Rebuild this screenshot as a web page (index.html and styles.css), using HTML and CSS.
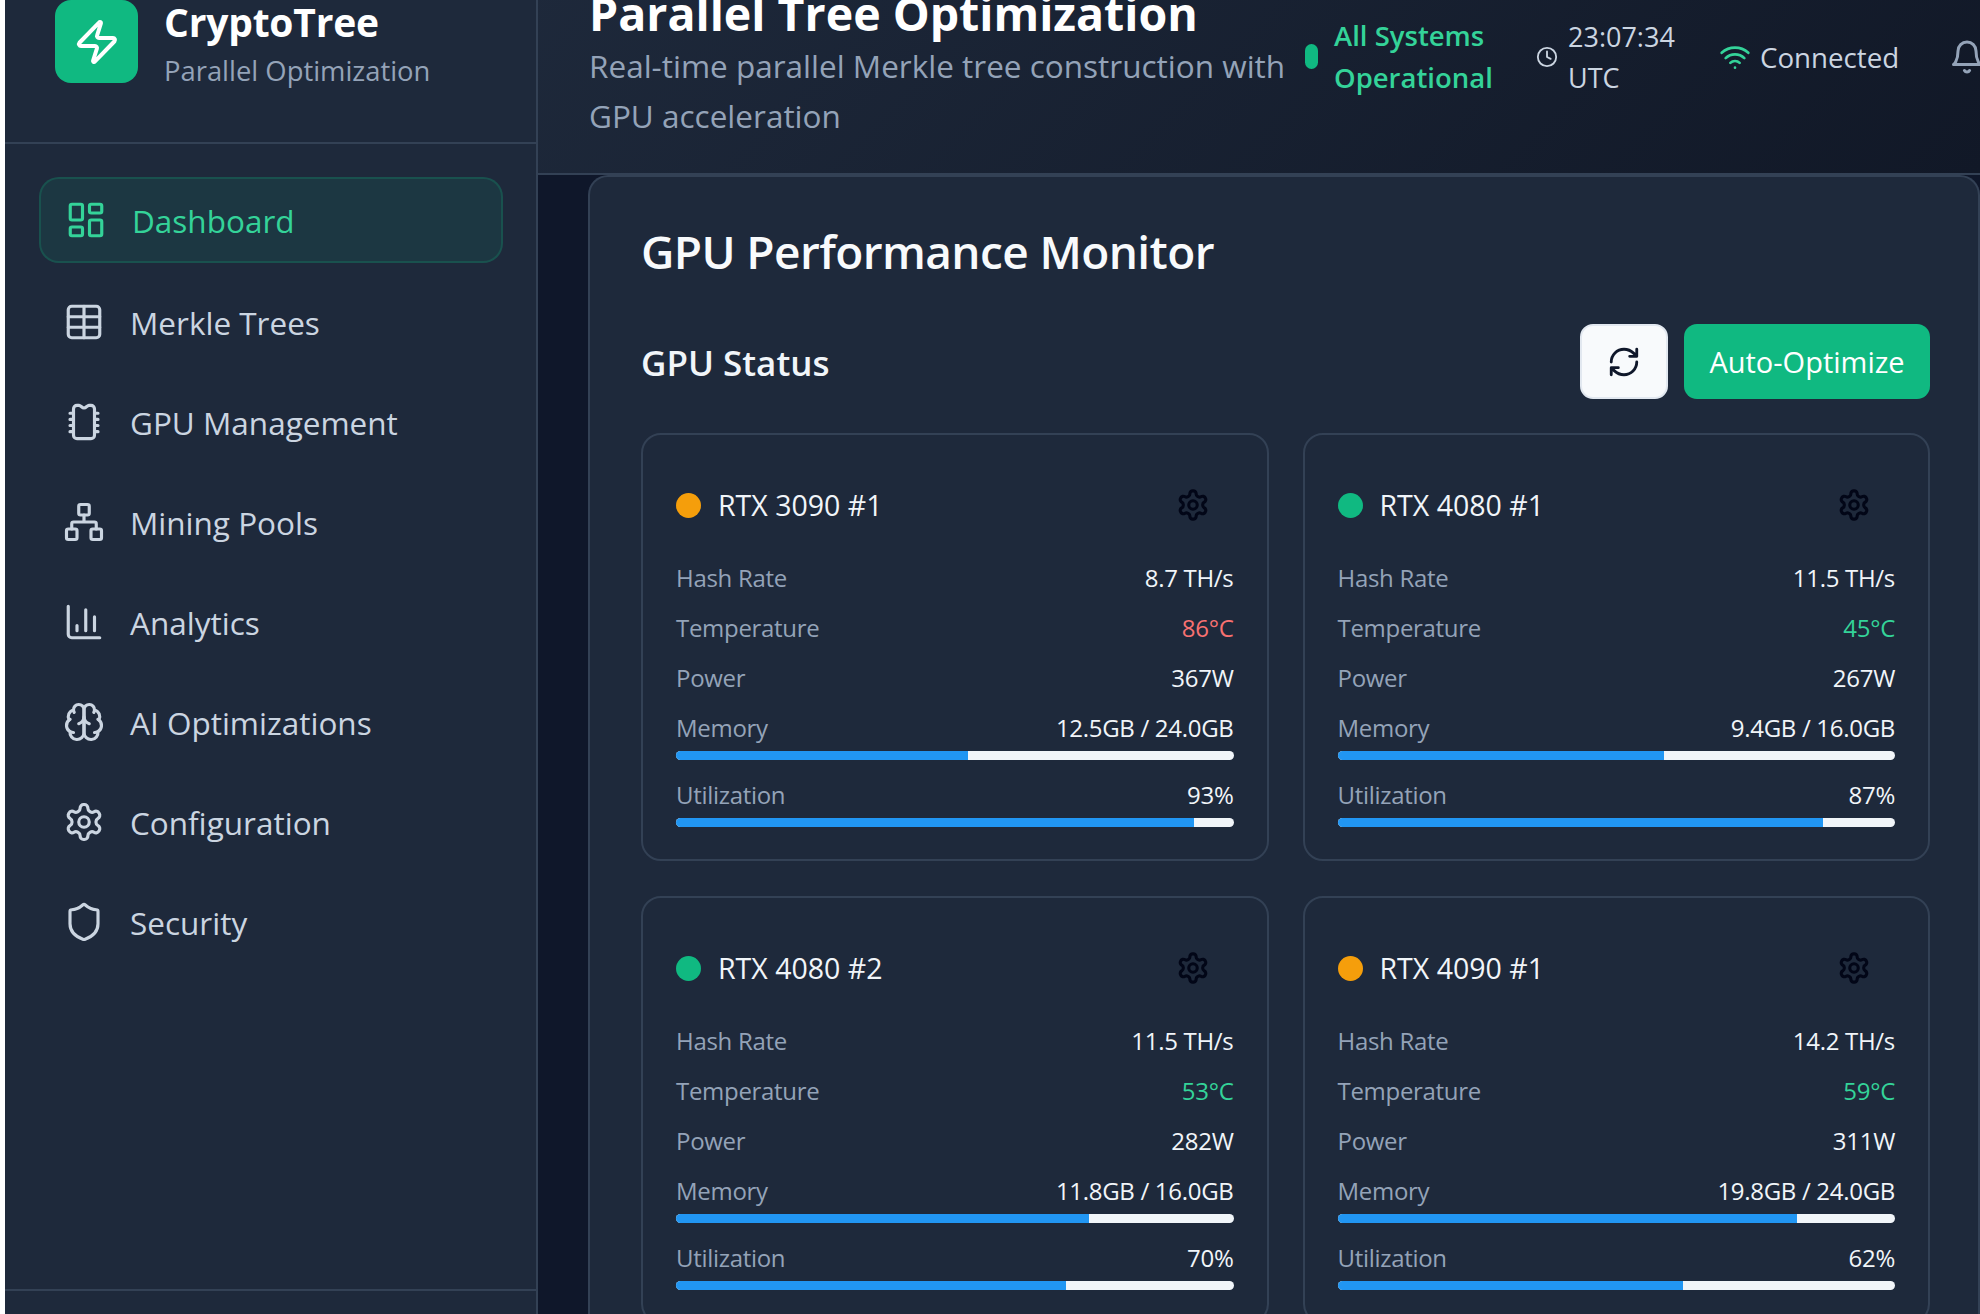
FILE: index.html
```html
<!DOCTYPE html>
<html lang="en">
<head>
    <meta charset="UTF-8">
    <meta name="viewport" content="width=device-width, initial-scale=1.0">
    <title>CryptoTree - GPU Performance Monitor</title>
    <link rel="stylesheet" href="styles.css">
</head>
<body>
    <svg class="icon-defs" aria-hidden="true">
        <symbol id="i-gear" viewBox="0 0 24 24">
            <path d="M12.22 2h-.44a2 2 0 0 0-2 2v.18a2 2 0 0 1-1 1.73l-.43.25a2 2 0 0 1-2 0l-.15-.08a2 2 0 0 0-2.73.73l-.22.38a2 2 0 0 0 .73 2.73l.15.1a2 2 0 0 1 1 1.72v.51a2 2 0 0 1-1 1.74l-.15.09a2 2 0 0 0-.73 2.73l.22.38a2 2 0 0 0 2.73.73l.15-.08a2 2 0 0 1 2 0l.43.25a2 2 0 0 1 1 1.73V20a2 2 0 0 0 2 2h.44a2 2 0 0 0 2-2v-.18a2 2 0 0 1 1-1.73l.43-.25a2 2 0 0 1 2 0l.15.08a2 2 0 0 0 2.73-.73l.22-.39a2 2 0 0 0-.73-2.73l-.15-.08a2 2 0 0 1-1-1.74v-.5a2 2 0 0 1 1-1.74l.15-.09a2 2 0 0 0 .73-2.73l-.22-.38a2 2 0 0 0-2.73-.73l-.15.08a2 2 0 0 1-2 0l-.43-.25a2 2 0 0 1-1-1.73V4a2 2 0 0 0-2-2z"/>
            <circle cx="12" cy="12" r="3"/>
        </symbol>
    </svg>

    <div class="app">
        <aside class="sidebar">
            <div class="brand">
                <div class="brand-logo">
                    <svg viewBox="0 0 24 24"><path d="M4 14a1 1 0 0 1-.78-1.63l9.9-10.2a.5.5 0 0 1 .86.46l-1.92 6.02A1 1 0 0 0 13 10h7a1 1 0 0 1 .78 1.63l-9.9 10.2a.5.5 0 0 1-.86-.46l1.92-6.02A1 1 0 0 0 11 14z"/></svg>
                </div>
                <div>
                    <div class="brand-name">CryptoTree</div>
                    <div class="brand-sub">Parallel Optimization</div>
                </div>
            </div>
            <nav class="nav">
                <a class="nav-item active" href="#">
                    <svg class="nav-icon" viewBox="0 0 24 24"><rect x="3" y="3" width="7" height="9" rx="1"/><rect x="14" y="3" width="7" height="5" rx="1"/><rect x="14" y="12" width="7" height="9" rx="1"/><rect x="3" y="16" width="7" height="5" rx="1"/></svg>
                    Dashboard
                </a>
                <a class="nav-item" href="#">
                    <svg class="nav-icon" viewBox="0 0 24 24"><rect x="3" y="3" width="18" height="18" rx="2"/><path d="M3 9h18M3 15h18M12 3v18"/></svg>
                    Merkle Trees
                </a>
                <a class="nav-item" href="#">
                    <svg class="nav-icon" viewBox="0 0 24 24"><path d="M8 2.5h1.2c.9 0 1.6 1.5 2.8 1.5s1.900-1.500 2.800-1.500H16a2 2 0 0 1 2 2v15a2 2 0 0 1-2 2H8a2 2 0 0 1-2-2v-15a2 2 0 0 1 2-2z"/><path d="M4 7h2M4 10.500h2M4 14h2M4 17.500h2M18 7h2M18 10.500h2M18 14h2M18 17.500h2"/></svg>
                    GPU Management
                </a>
                <a class="nav-item" href="#">
                    <svg class="nav-icon" viewBox="0 0 24 24"><rect x="16" y="16" width="6" height="6" rx="1"/><rect x="2" y="16" width="6" height="6" rx="1"/><rect x="9" y="2" width="6" height="6" rx="1"/><path d="M5 16v-3a1 1 0 0 1 1-1h12a1 1 0 0 1 1 1v3M12 12V8"/></svg>
                    Mining Pools
                </a>
                <a class="nav-item" href="#">
                    <svg class="nav-icon" viewBox="0 0 24 24"><path d="M3 3v16a2 2 0 0 0 2 2h16M18 17V9M13 17V5M8 17v-3"/></svg>
                    Analytics
                </a>
                <a class="nav-item" href="#">
                    <svg class="nav-icon" viewBox="0 0 24 24"><path d="M12 5a3 3 0 1 0-5.997.125 4 4 0 0 0-2.526 5.770 4 4 0 0 0 .556 6.588A4 4 0 1 0 12 18Z"/><path d="M12 5a3 3 0 1 1 5.997.125 4 4 0 0 1 2.526 5.770 4 4 0 0 1-.556 6.588A4 4 0 1 1 12 18Z"/><path d="M15 13a4.500 4.500 0 0 1-3-4 4.500 4.500 0 0 1-3 4"/><path d="M17.599 6.500a3 3 0 0 0 .399-1.375M6.003 5.125A3 3 0 0 0 6.401 6.500M3.477 10.896a4 4 0 0 1 .585-.396M19.938 10.500a4 4 0 0 1 .585.396M6 18a4 4 0 0 1-1.967-.516M19.967 17.484A4 4 0 0 1 18 18"/></svg>
                    AI Optimizations
                </a>
                <a class="nav-item" href="#">
                    <svg class="nav-icon"><use href="#i-gear"/></svg>
                    Configuration
                </a>
                <a class="nav-item" href="#">
                    <svg class="nav-icon" viewBox="0 0 24 24"><path d="M20 13c0 5-3.500 7.500-7.660 8.950a1 1 0 0 1-.67-.01C7.500 20.500 4 18 4 13V6a1 1 0 0 1 1-1c2 0 4.500-1.200 6.240-2.720a1.170 1.170 0 0 1 1.520 0C14.510 3.810 17 5 19 5a1 1 0 0 1 1 1z"/></svg>
                    Security
                </a>
            </nav>
            <div class="sidebar-foot"></div>
        </aside>

        <div class="content">
            <header class="topbar">
                <div class="page-title">
                    <h1>Parallel Tree Optimization</h1>
                    <p>Real-time parallel Merkle tree construction with GPU acceleration</p>
                </div>
                <div class="system-status">
                    <span class="status-pill"></span>
                    <span>All Systems Operational</span>
                </div>
                <div class="clock">
                    <svg viewBox="0 0 24 24"><circle cx="12" cy="12" r="10"/><path d="M12 6v6l4 2"/></svg>
                    <span>23:07:34 UTC</span>
                </div>
                <div class="connection">
                    <svg viewBox="0 0 24 24"><path d="M12 20h.01M2 8.820a15 15 0 0 1 20 0M5 12.859a10 10 0 0 1 14 0M8.500 16.429a5 5 0 0 1 7 0"/></svg>
                    <span>Connected</span>
                </div>
                <svg class="bell" viewBox="0 0 24 24"><path d="M6 8a6 6 0 0 1 12 0c0 7 3 9 3 9H3s3-2 3-9M10.300 21a1.940 1.940 0 0 0 3.400 0"/></svg>
            </header>

            <main class="main">
                <section class="panel">
                    <h2 class="panel-title">GPU Performance Monitor</h2>
                    <div class="panel-bar">
                        <h3>GPU Status</h3>
                        <div class="panel-actions">
                            <button class="btn-refresh">
                                <svg viewBox="0 0 24 24"><path d="M3 12a9 9 0 0 1 9-9 9.750 9.750 0 0 1 6.740 2.740L21 8M21 3v5h-5M21 12a9 9 0 0 1-9 9 9.750 9.750 0 0 1-6.740-2.740L3 16M8 16H3v5"/></svg>
                            </button>
                            <button class="btn-primary">Auto-Optimize</button>
                        </div>
                    </div>

                    <div class="gpu-grid">
                        <div class="gpu-card">
                            <div class="gpu-head">
                                <span class="dot warn"></span>
                                <span class="gpu-name">RTX 3090 #1</span>
                                <svg class="gpu-gear"><use href="#i-gear"/></svg>
                            </div>
                            <div class="stat"><span>Hash Rate</span><b>8.7 TH/s</b></div>
                            <div class="stat"><span>Temperature</span><b class="hot">86°C</b></div>
                            <div class="stat"><span>Power</span><b>367W</b></div>
                            <div class="stat tight"><span>Memory</span><b>12.5GB / 24.0GB</b></div>
                            <div class="bar"><div class="bar-fill" style="width: 52.3%"></div></div>
                            <div class="stat tight"><span>Utilization</span><b>93%</b></div>
                            <div class="bar"><div class="bar-fill" style="width: 93%"></div></div>
                        </div>

                        <div class="gpu-card">
                            <div class="gpu-head">
                                <span class="dot ok"></span>
                                <span class="gpu-name">RTX 4080 #1</span>
                                <svg class="gpu-gear"><use href="#i-gear"/></svg>
                            </div>
                            <div class="stat"><span>Hash Rate</span><b>11.5 TH/s</b></div>
                            <div class="stat"><span>Temperature</span><b class="cool">45°C</b></div>
                            <div class="stat"><span>Power</span><b>267W</b></div>
                            <div class="stat tight"><span>Memory</span><b>9.4GB / 16.0GB</b></div>
                            <div class="bar"><div class="bar-fill" style="width: 58.5%"></div></div>
                            <div class="stat tight"><span>Utilization</span><b>87%</b></div>
                            <div class="bar"><div class="bar-fill" style="width: 87%"></div></div>
                        </div>

                        <div class="gpu-card">
                            <div class="gpu-head">
                                <span class="dot ok"></span>
                                <span class="gpu-name">RTX 4080 #2</span>
                                <svg class="gpu-gear"><use href="#i-gear"/></svg>
                            </div>
                            <div class="stat"><span>Hash Rate</span><b>11.5 TH/s</b></div>
                            <div class="stat"><span>Temperature</span><b class="cool">53°C</b></div>
                            <div class="stat"><span>Power</span><b>282W</b></div>
                            <div class="stat tight"><span>Memory</span><b>11.8GB / 16.0GB</b></div>
                            <div class="bar"><div class="bar-fill" style="width: 74%"></div></div>
                            <div class="stat tight"><span>Utilization</span><b>70%</b></div>
                            <div class="bar"><div class="bar-fill" style="width: 70%"></div></div>
                        </div>

                        <div class="gpu-card">
                            <div class="gpu-head">
                                <span class="dot warn"></span>
                                <span class="gpu-name">RTX 4090 #1</span>
                                <svg class="gpu-gear"><use href="#i-gear"/></svg>
                            </div>
                            <div class="stat"><span>Hash Rate</span><b>14.2 TH/s</b></div>
                            <div class="stat"><span>Temperature</span><b class="cool">59°C</b></div>
                            <div class="stat"><span>Power</span><b>311W</b></div>
                            <div class="stat tight"><span>Memory</span><b>19.8GB / 24.0GB</b></div>
                            <div class="bar"><div class="bar-fill" style="width: 82.500%"></div></div>
                            <div class="stat tight"><span>Utilization</span><b>62%</b></div>
                            <div class="bar"><div class="bar-fill" style="width: 62%"></div></div>
                        </div>
                    </div>
                </section>
            </main>
        </div>
    </div>
</body>
</html>
```

FILE: styles.css
```css
* {
    box-sizing: border-box;
}

html, body {
    margin: 0;
    height: 100%;
    overflow: hidden;
}

body {
    background: #fff;
    font-family: "Open Sans", "Noto Sans", sans-serif;
    color: #f1f5f9;
}

svg {
    fill: none;
    stroke: currentColor;
    stroke-width: 2;
    stroke-linecap: round;
    stroke-linejoin: round;
}

.icon-defs {
    display: none;
}

/* the page is scrolled 50px down in the shot */
.app {
    display: flex;
    height: 1364px;
    margin: -50px 0 0 5px;
    background: #0f172a;
}

/* sidebar */
.sidebar {
    display: flex;
    flex-direction: column;
    flex: 0 0 533px;
    background: #1e293b;
    border-right: 2px solid #334155;
}

.brand {
    display: flex;
    align-items: flex-start;
    gap: 26px;
    height: 194px;
    padding: 50px 30px 0 50px;
    border-bottom: 2px solid #334155;
}

.brand-logo {
    display: flex;
    align-items: center;
    justify-content: center;
    flex: 0 0 83px;
    height: 83px;
    border-radius: 16px;
    background: #10b981;
    color: #fff;
}

.brand-logo svg {
    width: 48px;
    height: 48px;
}

.brand-name {
    font-size: 39px;
    font-weight: 700;
    line-height: 50px;
    letter-spacing: -0.2px;
    color: #fff;
    margin-top: -3px;
}

.brand-sub {
    font-size: 27.4px;
    line-height: 40px;
    color: #94a3b8;
    margin-top: 4px;
}

.nav {
    flex: 1;
    padding: 33px 33px 0 34px;
}

.nav-item {
    display: flex;
    align-items: center;
    gap: 25px;
    height: 86px;
    margin-bottom: 14px;
    padding-left: 22px;
    border: 2px solid transparent;
    border-radius: 20px;
    font-size: 31.5px;
    color: #cbd5e1;
    text-decoration: none;
}

.nav-item.active {
    margin-bottom: 16px;
    padding-left: 24px;
    background: rgba(16, 185, 129, 0.1);
    border-color: rgba(16, 185, 129, 0.2);
    color: #34d399;
}

.nav-icon {
    flex: 0 0 42px;
    width: 42px;
    height: 42px;
    stroke-width: 1.8;
}

.sidebar-foot {
    height: 25px;
    border-top: 2px solid #334155;
}

/* top bar */
.content {
    flex: 1;
    min-width: 0;
    display: flex;
    flex-direction: column;
}

.topbar {
    display: flex;
    align-items: center;
    height: 225px;
    padding: 0 0 10px 51px;
    background: linear-gradient(135deg, #1e293b, #111827);
    border-bottom: 2px solid #334155;
    overflow: hidden;
}

.page-title {
    flex: 0 0 704px;
    margin-top: 12px;
}

.page-title h1 {
    margin: 0;
    font-size: 46.5px;
    line-height: 56px;
    font-weight: 700;
    color: #fff;
    white-space: nowrap;
}

.page-title p {
    margin: 0;
    font-size: 31.5px;
    line-height: 50px;
    color: #94a3b8;
}

.system-status {
    display: flex;
    align-items: center;
    gap: 16px;
    margin: 0 0 0 12px;
    width: 190px;
    font-size: 27.5px;
    font-weight: 600;
    line-height: 42px;
    color: #34d399;
    flex: none;
}

.status-pill {
    flex: 0 0 13px;
    height: 25px;
    border-radius: 7px;
    background: #10b981;
}

.clock {
    display: flex;
    align-items: center;
    gap: 10px;
    margin-left: 41px;
    width: 141px;
    flex: none;
    font-size: 27px;
    line-height: 41px;
    color: #cbd5e1;
}

.clock svg {
    flex: 0 0 22px;
    height: 22px;
}

.connection {
    display: flex;
    align-items: center;
    gap: 9px;
    margin-left: 42px;
    flex: none;
    font-size: 27.7px;
    color: #cbd5e1;
}

.connection svg {
    flex: 0 0 32px;
    height: 32px;
    color: #34d399;
}

.bell {
    flex: none;
    width: 36px;
    height: 36px;
    margin-left: 50px;
    color: #94a3b8;
}

/* main panel */
.main {
    flex: 1;
    padding-left: 50px;
    min-height: 0;
}

.panel {
    padding: 0 48px 0 51px;
    background: #1e293b;
    border: 2px solid #334155;
    border-bottom: 0;
    border-radius: 20px 20px 0 0;
}

.panel-title {
    margin: 0;
    padding-top: 42px;
    font-size: 46px;
    line-height: 64px;
    font-weight: 600;
    letter-spacing: -0.6px;
    color: #f8fafc;
}

.panel-bar {
    display: flex;
    align-items: center;
    justify-content: space-between;
    margin-top: 41px;
    margin-bottom: 34px;
}

.panel-bar h3 {
    margin: 2px 0 0;
    font-size: 35px;
    font-weight: 600;
    color: #f1f5f9;
}

.panel-actions {
    display: flex;
    gap: 16px;
}

.btn-refresh {
    display: flex;
    align-items: center;
    justify-content: center;
    width: 88px;
    height: 75px;
    background: #f8fafc;
    border: 2px solid #e2e8f0;
    border-radius: 13px;
    color: #0f172a;
}

.btn-refresh svg {
    width: 34px;
    height: 34px;
}

.btn-primary {
    width: 246px;
    height: 75px;
    background: #10b981;
    border: none;
    border-radius: 13px;
    font-family: inherit;
    font-size: 29px;
    font-weight: 500;
    color: #fff;
}

/* gpu cards */
.gpu-grid {
    display: grid;
    grid-template-columns: 1fr 1fr;
    column-gap: 34px;
    row-gap: 35px;
}

.gpu-card {
    padding: 33px 33px 32px;
    border: 2px solid #334155;
    border-radius: 20px;
}

.gpu-head {
    display: flex;
    align-items: center;
    height: 74px;
    margin-bottom: 17px;
}

.dot {
    flex: 0 0 25px;
    height: 25px;
    border-radius: 50%;
}

.dot.warn {
    background: #f59e0b;
}

.dot.ok {
    background: #10b981;
}

.gpu-name {
    flex: 1;
    margin-left: 17px;
    font-size: 28.5px;
    font-weight: 500;
    color: #f1f5f9;
}

.gpu-gear {
    width: 34px;
    height: 34px;
    margin-right: 24px;
    stroke-width: 2.2;
    color: #020617;
}

.stat {
    display: flex;
    justify-content: space-between;
    margin-bottom: 12px;
    font-size: 24px;
    letter-spacing: -0.3px;
    line-height: 38px;
}

.stat.tight {
    margin-bottom: 4px;
}

.stat span {
    color: #94a3b8;
}

.stat b {
    font-weight: 400;
    color: #f1f5f9;
}

.stat b.hot {
    color: #f87171;
}

.stat b.cool {
    color: #34d399;
}

.bar {
    height: 9px;
    margin-bottom: 16px;
    border-radius: 5px;
    background: #f1f5f9;
    overflow: hidden;
}

.bar:last-child {
    margin-bottom: 0;
}

.bar-fill {
    height: 100%;
    background: #2196f3;
}
```
